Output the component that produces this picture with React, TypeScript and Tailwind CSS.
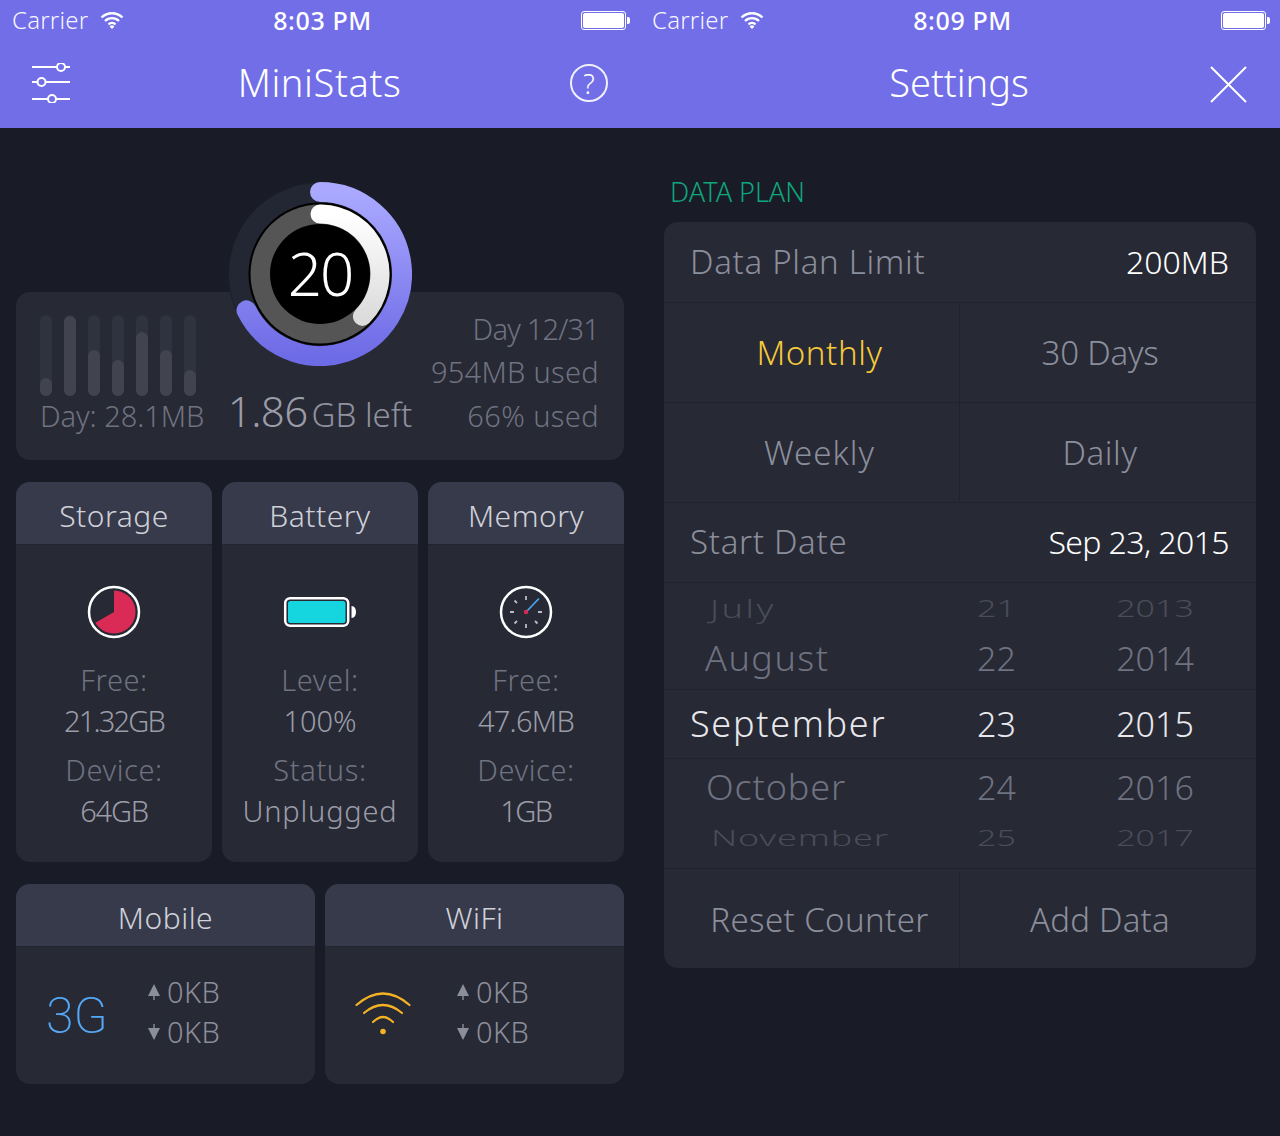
import React from 'react';

const bars = [18, 80, 46, 36, 64, 46, 26];

const StatusBar: React.FC<{ time: string }> = ({ time }) => (
  <div className="h-10 flex items-center justify-between pl-3 pr-[10px] text-white">
    <div className="flex items-center gap-[12px] w-[200px]">
      <span className="text-[24px] font-light leading-none text-white/95 tracking-[0.2px]">Carrier</span>
      <svg width="24" height="18" viewBox="0 0 24 18" fill="none" stroke="white" strokeWidth="2.4">
        <path d="M1.500 6.500a15 15 0 0 1 21 0" />
        <path d="M5 10a10 10 0 0 1 14 0" />
        <path d="M8.500 13.500a5 5 0 0 1 7 0" />
        <path d="M12 18l-2.400-2.600a3.400 3.400 0 0 1 4.800 0z" fill="white" stroke="none" />
      </svg>
    </div>
    <span className="text-[25px] font-medium leading-none tracking-[0.6px] ml-[3px]">{time}</span>
    <div className="w-[200px] flex justify-end items-center">
      <div className="w-[45px] h-[19px] border border-white rounded-[3px] p-[1px]">
        <div className="w-full h-full bg-white rounded-[2px]" />
      </div>
      <div className="w-[3px] h-[7px] bg-white rounded-r-[2px] ml-[1px]" />
    </div>
  </div>
);

const SlidersIcon = () => (
  <svg width="40" height="40" viewBox="0 0 40 40" fill="none" stroke="white" strokeWidth="2">
    <path d="M1 4h25M34 4h5M1 19h6M14 19h25M1 36h16M25 36h14" />
    <circle cx="30" cy="4" r="4" />
    <circle cx="10.500" cy="19" r="4" />
    <circle cx="21" cy="36" r="4" />
  </svg>
);

const HelpIcon = () => (
  <div className="w-[38px] h-[38px] mr-[-1px] rounded-full border-2 border-white/90 flex items-center justify-center text-white text-[27px] font-light leading-none">
    ?
  </div>
);

const CloseIcon = () => (
  <svg width="37" height="37" viewBox="0 0 37 37" stroke="white" strokeWidth="2" className="mt-[3px]">
    <path d="M1 1l35 35M36 1L1 36" />
  </svg>
);

const Gauge = () => (
  <div className="absolute left-[212px] top-[-110px] w-[184px] h-[184px]">
    <svg width="184" height="184" viewBox="0 0 184 184" fill="none">
      <defs>
        <linearGradient id="outerArc" x1="0" y1="0" x2="0" y2="1">
          <stop offset="0" stopColor="#aaa9ff" />
          <stop offset="1" stopColor="#6e6be6" />
        </linearGradient>
        <linearGradient id="innerArc" x1="0" y1="0" x2="0" y2="1">
          <stop offset="0" stopColor="#ffffff" />
          <stop offset="1" stopColor="#dcdcdc" />
        </linearGradient>
      </defs>
      <circle cx="92" cy="92" r="91.500" fill="#232633" stroke="#1c1e29" />
      <path d="M92 10A82 82 0 1 1 18.500 128.400" stroke="url(#outerArc)" strokeWidth="20" strokeLinecap="round" />
      <circle cx="92" cy="92" r="71.500" fill="#000" />
      <circle cx="92" cy="92" r="69.500" fill="#555555" />
      <path d="M92 32A60 60 0 0 1 134.400 134.400" stroke="url(#innerArc)" strokeWidth="19" strokeLinecap="round" />
      <circle cx="92" cy="92" r="50" fill="#000" />
    </svg>
    <div className="absolute inset-0 flex items-center justify-center text-white text-[60px] font-light leading-none pb-[2px] tracking-[-2px]">
      20
    </div>
  </div>
);

const TopPanel = () => (
  <div className="relative h-[168px] bg-[#272935] rounded-[14px] text-[#6f7280] font-light">
    <Gauge />
    <div className="flex h-full">
      <div className="w-[212px] pl-6 pt-[23px] flex flex-col">
        <div className="flex gap-3 h-[81px]">
          {bars.map((h, i) => (
            <div key={i} className="w-3 h-full bg-[#2f323f] rounded-full flex flex-col justify-end">
              <div className="bg-[#41444f] rounded-full" style={{ height: h }} />
            </div>
          ))}
        </div>
        <div className="text-[29px] leading-none mt-[5px] whitespace-nowrap w-[190px] tracking-[-0.05px]">Day: 28.1MB</div>
      </div>
      <div className="w-[184px] flex flex-col items-center justify-end pb-[28px]">
        <div className="flex items-baseline whitespace-nowrap text-[#9a9ca8] text-[33px] leading-none">
          <span className="text-[42px] tracking-[-0.6px]">1.86</span>
          <span className="ml-1 text-[#8f919e]">GB left</span>
        </div>
      </div>
      <div className="flex-1 flex flex-col items-end justify-end pr-[25px] pb-[23px] text-[29px] leading-[43.5px] whitespace-nowrap">
        <div className="tracking-[-0.8px]">Day 12/31</div>
        <div className="tracking-[0.3px]">954MB used</div>
        <div className="tracking-[0.4px]">66% used</div>
      </div>
    </div>
  </div>
);

const CardHead: React.FC<{ title: string }> = ({ title }) => (
  <div className="h-[63px] pt-[4px] bg-[#373a4b] border-b border-[#22242f] rounded-t-[14px] flex items-center justify-center text-[#d0d1d8] text-[30px] font-light tracking-[0.5px]">
    {title}
  </div>
);

const PieIcon = () => (
  <svg width="54" height="54" viewBox="0 0 54 54">
    <circle cx="27" cy="27" r="25" fill="none" stroke="white" strokeWidth="2.500" />
    <path d="M27 27V5.500A21.500 21.500 0 1 1 8.400 37.800Z" fill="#d92b55" />
  </svg>
);

const BatteryIcon = () => (
  <svg width="74" height="32" viewBox="0 0 74 32">
    <rect x="2.200" y="2.200" width="63" height="27.600" rx="5" fill="none" stroke="white" strokeWidth="2.500" />
    <rect x="5" y="5" width="57.500" height="22" rx="2.500" fill="#15d6df" />
    <path d="M68.500 10c3 0 4.500 3 4.500 6s-1.500 6-4.500 6z" fill="white" />
  </svg>
);

const DialIcon = () => (
  <svg width="54" height="54" viewBox="0 0 54 54" fill="none">
    <circle cx="27" cy="27" r="25" stroke="white" strokeWidth="2.500" />
    <path d="M27 11v4M27 39v4M11 27h4M39 27h4M15.500 15.500l2.500 2.500M38.500 38.500l-2.500-2.500M15.500 38.500l2.500-2.500" stroke="#b9bbc6" strokeWidth="1.800" />
    <path d="M27 27L40 13.500" stroke="#4da3f0" strokeWidth="1.800" />
    <circle cx="27" cy="27" r="2.200" fill="#d92b55" />
  </svg>
);

const InfoCard: React.FC<{
  title: string;
  icon: React.ReactNode;
  lines: [string, string, string, string];
  valueFit: string;
  lastFit: string;
}> = ({ title, icon, lines, valueFit, lastFit }) => (
  <div className="flex-1 h-[380px] bg-[#272935] rounded-[14px]">
    <CardHead title={title} />
    <div className="h-[54px] mt-[40px] flex items-center justify-center">{icon}</div>
    <div className="mt-[20px] text-center text-[29px] font-light leading-[41px] whitespace-nowrap">
      <div className="text-[#6f7280] tracking-[0.6px]">{lines[0]}</div>
      <div className={`text-[#9a9ca8] ${valueFit}`}>{lines[1]}</div>
      <div className="text-[#6f7280] mt-2 tracking-[0.6px]">{lines[2]}</div>
      <div className={`text-[#9a9ca8] ${lastFit}`}>{lines[3]}</div>
    </div>
  </div>
);

const Arrow: React.FC<{ down?: boolean }> = ({ down }) => (
  <svg width="12" height="16" viewBox="0 0 12 16" fill="#8b8e9b" className={down ? 'rotate-180' : ''}>
    <path d="M6 0l6 12H6.700V16H5.300V12H0z" />
  </svg>
);

const Traffic = () => (
  <div className="text-[#8b8e9b] text-[29px] font-light leading-[40px] mb-[7px] tracking-[0.4px]">
    <div className="flex items-center gap-[7px]">
      <Arrow />
      <span>0KB</span>
    </div>
    <div className="flex items-center gap-[7px]">
      <Arrow down />
      <span>0KB</span>
    </div>
  </div>
);

const NetCard: React.FC<{ title: string; icon: React.ReactNode }> = ({ title, icon }) => (
  <div className="flex-1 h-[200px] bg-[#272935] rounded-[14px]">
    <CardHead title={title} />
    <div className="flex items-center h-[137px]">
      <div className="w-[132px] flex">{icon}</div>
      <Traffic />
    </div>
  </div>
);

const WifiIcon = () => (
  <svg width="56" height="44" viewBox="0 0 56 44" fill="none" stroke="#f5b324" strokeWidth="2.200" strokeLinecap="round" className="ml-[30px] mb-[3px]">
    <path d="M1.500 13Q28 -10 54.500 13" />
    <path d="M9 21Q28 5 47 21" />
    <path d="M18 30Q28 20 38 30" />
    <circle cx="28" cy="39.500" r="2.800" fill="#f5b324" stroke="none" />
  </svg>
);

const Header: React.FC<{ time: string; title: string; left?: React.ReactNode; right: React.ReactNode; titleFit?: string }> = ({
  time,
  title,
  left,
  right,
  titleFit,
}) => (
  <div className="h-32 bg-[#716ee8]">
    <StatusBar time={time} />
    <div className="relative h-[88px] flex items-center justify-between pl-[31px] pr-[33px] pb-[2px]">
      <div className="w-10">{left}</div>
      <span className={`text-white text-[38px] font-light leading-none pb-[2px] ${titleFit ?? ''}`}>{title}</span>
      <div className="w-10 flex justify-end">{right}</div>
    </div>
  </div>
);

const Row: React.FC<{ label: string; value: string; first?: boolean }> = ({ label, value, first }) => (
  <div
    className={`${first ? 'h-[81px]' : 'h-20 pb-[1px]'} flex items-center justify-between pl-[26px] pr-[27px] border-b border-[#20222d] text-[33px] font-light`}
  >
    <span className="text-[#8b8e9b] tracking-[0.7px]">{label}</span>
    <span className={`text-white text-[32px] ${first ? '' : 'tracking-[-0.6px]'}`}>{value}</span>
  </div>
);

const Cell: React.FC<{ text: string; active?: boolean; right?: boolean; fit?: string }> = ({
  text,
  active,
  right,
  fit = 'tracking-[0.4px]',
}) => (
  <div
    className={`basis-1/2 h-full flex items-center justify-center text-[33px] font-light ${fit} ${
      active ? 'text-[#f5c93a]' : 'text-[#8b8e9b]'
    } ${right ? 'pr-4' : 'pl-4 border-r border-[#20222d]'}`}
  >
    {text}
  </div>
);

const wheel = [
  { m: 'July', d: '21', y: '2013', h: 'h-[51px]', t: 'scale-y-[0.7] text-[#4a4c58]', ml: 'pl-[46px] tracking-[2.5px]', pad: '' },
  { m: 'August', d: '22', y: '2014', h: 'h-[55px]', t: 'scale-y-[0.95] text-[#6f7280]', ml: 'pl-[41px] tracking-[1.5px]', pad: 'pb-[5px]' },
  { m: 'September', d: '23', y: '2015', h: 'h-[70px]', t: 'text-[#e8e8ec]', ml: 'pl-[26px] tracking-[1.7px]', pad: '' },
  { m: 'October', d: '24', y: '2016', h: 'h-[58px]', t: 'scale-y-[0.95] text-[#6f7280]', ml: 'pl-[42px] tracking-[0.9px]', pad: '' },
  { m: 'November', d: '25', y: '2017', h: 'h-[52px]', t: 'scale-y-[0.62] text-[#4a4c58]', ml: 'pl-[47px] tracking-[0.8px]', pad: 'pb-[10px]' },
];

const Picker = () => (
  <div className="h-[286px] border-b border-[#20222d] overflow-hidden text-[36px] font-light">
    {wheel.map((r) => (
      <div
        key={r.m}
        className={`${r.h} ${r.pad} flex items-center ${r.m === 'September' ? 'border-y border-[#20222d]' : ''}`}
      >
        <div className={`w-[296px] ${r.ml} whitespace-nowrap ${r.t}`}>{r.m}</div>
        <div className={`w-[73px] text-center text-[34px] ${r.t}`}>{r.d}</div>
        <div className={`w-[100px] ml-[72px] text-center text-[34px] ${r.t}`}>{r.y}</div>
      </div>
    ))}
  </div>
);

export default function App() {
  return (
    <div className="flex w-[1280px] h-[1136px] bg-[#191c27] font-['Noto_Sans',sans-serif] overflow-hidden">
      <div className="w-[640px]">
        <Header time="8:03 PM" title="MiniStats" left={<SlidersIcon />} right={<HelpIcon />} titleFit="tracking-[0.6px] ml-[1px]" />
        <div className="px-4 pt-[164px]">
          <TopPanel />
          <div className="flex gap-[10px] mt-[22px]">
            <InfoCard
              title="Storage"
              icon={<PieIcon />}
              lines={['Free:', '21.32GB', 'Device:', '64GB']}
              valueFit="tracking-[-1.8px]"
              lastFit="tracking-[-1.2px]"
            />
            <InfoCard
              title="Battery"
              icon={<BatteryIcon />}
              lines={['Level:', '100%', 'Status:', 'Unplugged']}
              valueFit="tracking-[0px]"
              lastFit="tracking-[0.8px]"
            />
            <InfoCard
              title="Memory"
              icon={<DialIcon />}
              lines={['Free:', '47.6MB', 'Device:', '1GB']}
              valueFit="tracking-[-0.7px]"
              lastFit="tracking-[-1.5px]"
            />
          </div>
          <div className="flex gap-[10px] mt-[22px]">
            <NetCard
              title="Mobile"
              icon={<span className="ml-[30px] font-['Roboto',sans-serif] font-extralight text-[#55a8f5] text-[50px] leading-none">3G</span>}
            />
            <NetCard title="WiFi" icon={<WifiIcon />} />
          </div>
        </div>
      </div>
      <div className="w-[640px]">
        <Header time="8:09 PM" title="Settings" right={<CloseIcon />} />
        <div className="px-6 pt-[50px]">
          <div className="pl-[6px] text-[#0fa67c] text-[27px] font-light leading-none h-[44px]">DATA PLAN</div>
          <div className="bg-[#272935] rounded-[14px] overflow-hidden">
            <Row label="Data Plan Limit" value="200MB" first />
            <div className="h-[100px] pt-[1px] flex border-b border-[#20222d]">
              <Cell text="Monthly" active fit="tracking-[0.6px]" />
              <Cell text="30 Days" right fit="tracking-[-0.2px]" />
            </div>
            <div className="h-[100px] flex border-b border-[#20222d]">
              <Cell text="Weekly" fit="tracking-[1px]" />
              <Cell text="Daily" right fit="tracking-[0.6px]" />
            </div>
            <Row label="Start Date" value="Sep 23, 2015" />
            <Picker />
            <div className="h-[99px] flex pt-[3px]">
              <Cell text="Reset Counter" />
              <Cell text="Add Data" right fit="tracking-[0.2px]" />
            </div>
          </div>
        </div>
      </div>
    </div>
  );
}
